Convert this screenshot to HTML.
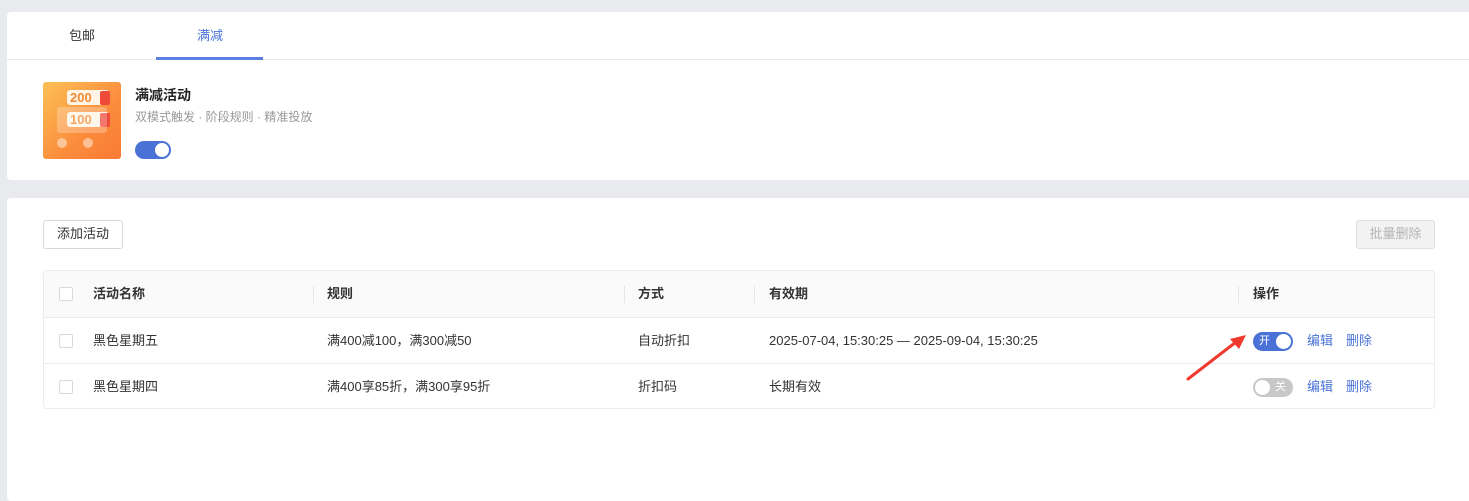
<!DOCTYPE html>
<html><head><meta charset="utf-8"><style>
*{box-sizing:border-box;margin:0;padding:0}
body{width:1469px;height:501px;background:#e9eaee;font-family:"Liberation Sans","Noto Sans CJK SC",sans-serif;font-size:13px;color:#333;position:relative;overflow:hidden}
.card{position:absolute;left:7px;right:0;background:#fff;border-radius:4px 0 0 4px}
.abs{position:absolute}
.tabs{height:48px;border-bottom:1px solid #e8e8e8;position:relative}
.tab{position:absolute;top:0;line-height:48px;font-size:13px}
.cb{position:absolute;left:15px;width:14px;height:14px;border:1px solid #d9d9d9;border-radius:2px;background:#fff}
.row{position:absolute;left:0;right:0;height:46px;border-top:1px solid #ebebeb}
.row span{position:absolute;top:0;line-height:45px;height:45px}
.sep{position:absolute;top:15px;width:1px;height:17px;background:#e5e5e5}
.link{color:#4a72d6}
</style></head><body>
<div class="card" style="top:12px;height:168px">
 <div class="tabs">
  <div class="tab" style="left:62px">包邮</div>
  <div class="tab" style="left:190px;color:#4a72d6">满减</div>
  <div class="abs" style="left:149px;top:45px;width:107px;height:3px;background:#5b7ee0"></div>
 </div>
 <div class="abs" style="left:36px;top:70px;width:78px;height:77px;border-radius:3px;background:linear-gradient(135deg,#fcc156,#fb8c3c 60%,#f87a35)">
  <div class="abs" style="left:24px;top:8px;width:42px;height:15px;background:#fff4e6;border-radius:3px;color:#f58a32;font-weight:bold;font-size:13px;line-height:15px;padding-left:3px">200</div>
  <div class="abs" style="left:57px;top:9px;width:10px;height:14px;background:#ef4b3a;border-radius:2px"></div>
  <div class="abs" style="left:24px;top:30px;width:42px;height:15px;background:#fff4e6;border-radius:3px;color:#f58a32;font-weight:bold;font-size:13px;line-height:15px;padding-left:3px">100</div>
  <div class="abs" style="left:57px;top:31px;width:10px;height:14px;background:#ef4b3a;border-radius:2px"></div>
  <div class="abs" style="left:14px;top:25px;width:50px;height:26px;background:rgba(255,255,255,.25);border-radius:3px"></div>
  <div class="abs" style="left:14px;top:56px;width:10px;height:10px;border-radius:50%;background:rgba(255,230,210,.6)"></div>
  <div class="abs" style="left:40px;top:56px;width:10px;height:10px;border-radius:50%;background:rgba(255,230,210,.6)"></div>
 </div>
 <div class="abs" style="left:128px;top:73px;font-size:14px;font-weight:bold;color:#222">满减活动</div>
 <div class="abs" style="left:128px;top:96px;font-size:12px;color:#999">双模式触发 · 阶段规则 · 精准投放</div>
 <div class="abs" style="left:128px;top:129px;width:36px;height:18px;border-radius:9px;background:#4a72d6"><div class="abs" style="right:2px;top:2px;width:14px;height:14px;border-radius:50%;background:#fff"></div></div>
</div>
<div class="card" style="top:198px;height:303px">
 <div class="abs" style="left:36px;top:22px;width:80px;height:29px;border:1px solid #d9d9d9;border-radius:3px;text-align:center;line-height:26px">添加活动</div>
 <div class="abs" style="left:1349px;top:22px;width:79px;height:29px;border:1px solid #e0e0e0;border-radius:3px;background:#f2f2f2;color:#b5b5b5;text-align:center;line-height:26px">批量删除</div>
 <div class="abs" style="left:36px;top:72px;width:1392px;height:139px;border:1px solid #ebebeb;border-radius:4px;overflow:hidden">
  <div class="row" style="top:0;border-top:none;background:#fafafa;font-weight:bold;height:46px">
   <div class="cb" style="top:16px"></div>
   <span style="left:49px">活动名称</span>
   <div class="sep" style="left:269px"></div><span style="left:283px">规则</span>
   <div class="sep" style="left:580px"></div><span style="left:594px">方式</span>
   <div class="sep" style="left:710px"></div><span style="left:725px">有效期</span>
   <div class="sep" style="left:1194px"></div><span style="left:1209px">操作</span>
  </div>
  <div class="row" style="top:46px">
   <div class="cb" style="top:16px"></div>
   <span style="left:49px">黑色星期五</span><span style="left:283px">满400减100，满300减50</span><span style="left:594px">自动折扣</span><span style="left:725px">2025-07-04, 15:30:25 — 2025-09-04, 15:30:25</span>
   <div class="abs" style="left:1209px;top:14px;width:40px;height:19px;border-radius:10px;background:#4a72d6;color:#fff;font-size:11px;line-height:19px;padding-left:6px">开<div class="abs" style="right:2px;top:2px;width:15px;height:15px;border-radius:50%;background:#fff"></div></div>
   <span class="link" style="left:1263px">编辑</span><span class="link" style="left:1302px">删除</span>
  </div>
  <div class="row" style="top:92px">
   <div class="cb" style="top:16px"></div>
   <span style="left:49px">黑色星期四</span><span style="left:283px">满400享85折，满300享95折</span><span style="left:594px">折扣码</span><span style="left:725px">长期有效</span>
   <div class="abs" style="left:1209px;top:14px;width:40px;height:19px;border-radius:10px;background:#c8c8c8;color:#fff;font-size:11px;line-height:19px;padding-left:22px">关<div class="abs" style="left:2px;top:2px;width:15px;height:15px;border-radius:50%;background:#fff"></div></div>
   <span class="link" style="left:1263px">编辑</span><span class="link" style="left:1302px">删除</span>
  </div>
 </div>
</div>
<svg class="abs" style="left:1180px;top:328px" width="70" height="56" viewBox="0 0 70 56"><line x1="8" y1="51" x2="56" y2="14" stroke="#f03a2e" stroke-width="3" stroke-linecap="round"/><polygon points="66,7 50,11 59,21" fill="#f03a2e"/></svg>
</body></html>
